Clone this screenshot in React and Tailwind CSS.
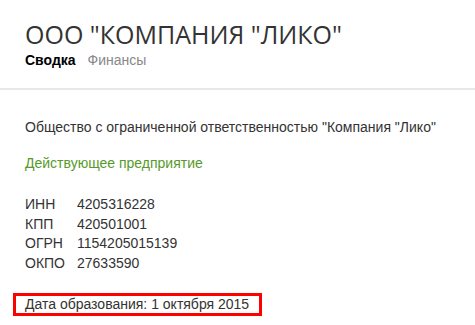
export default function App() {
  const rows = [
    ["ИНН", "4205316228"],
    ["КПП", "420501001"],
    ["ОГРН", "1154205015139"],
    ["ОКПО", "27633590"],
  ];
  return (
    <div className="w-[475px] h-[325px] bg-white overflow-hidden" style={{ fontFamily: '"Liberation Sans", Arial, sans-serif' }}>
      <div className="px-[25px] pt-[18px]">
        <h1 className="text-[25px] leading-[32px] text-[#333]" style={{ fontFamily: '"Open Sans", sans-serif' }}>
          ООО "КОМПАНИЯ "ЛИКО"
        </h1>
        <div className="flex gap-[12px] text-[14px] leading-[20px]">
          <span className="font-bold text-black">Сводка</span>
          <span className="text-[#888]">Финансы</span>
        </div>
      </div>
      <div className="mt-[18px] h-[2px] bg-[#e8e8e8]" />
      <div className="px-[25px] text-[14px] text-[#333]">
        <p className="mt-[27px] leading-[20px]">Общество с ограниченной ответственностью "Компания "Лико"</p>
        <p className="mt-[16px] leading-[20px] text-[#559a2b]">Действующее предприятие</p>
        <div className="mt-[22px] grid grid-cols-[52px_1fr] leading-[19.7px]">
          {rows.map(([k, v]) => (
            <div key={k} className="contents">
              <span>{k}</span>
              <span>{v}</span>
            </div>
          ))}
        </div>
      </div>
      <div className="ml-[13px] mt-[19px] w-[249px] h-[23px] border-[3px] border-[#ff0000] flex items-center pl-[9px] text-[14px] text-[#333]">
        Дата образования: 1 октября 2015
      </div>
    </div>
  );
}
